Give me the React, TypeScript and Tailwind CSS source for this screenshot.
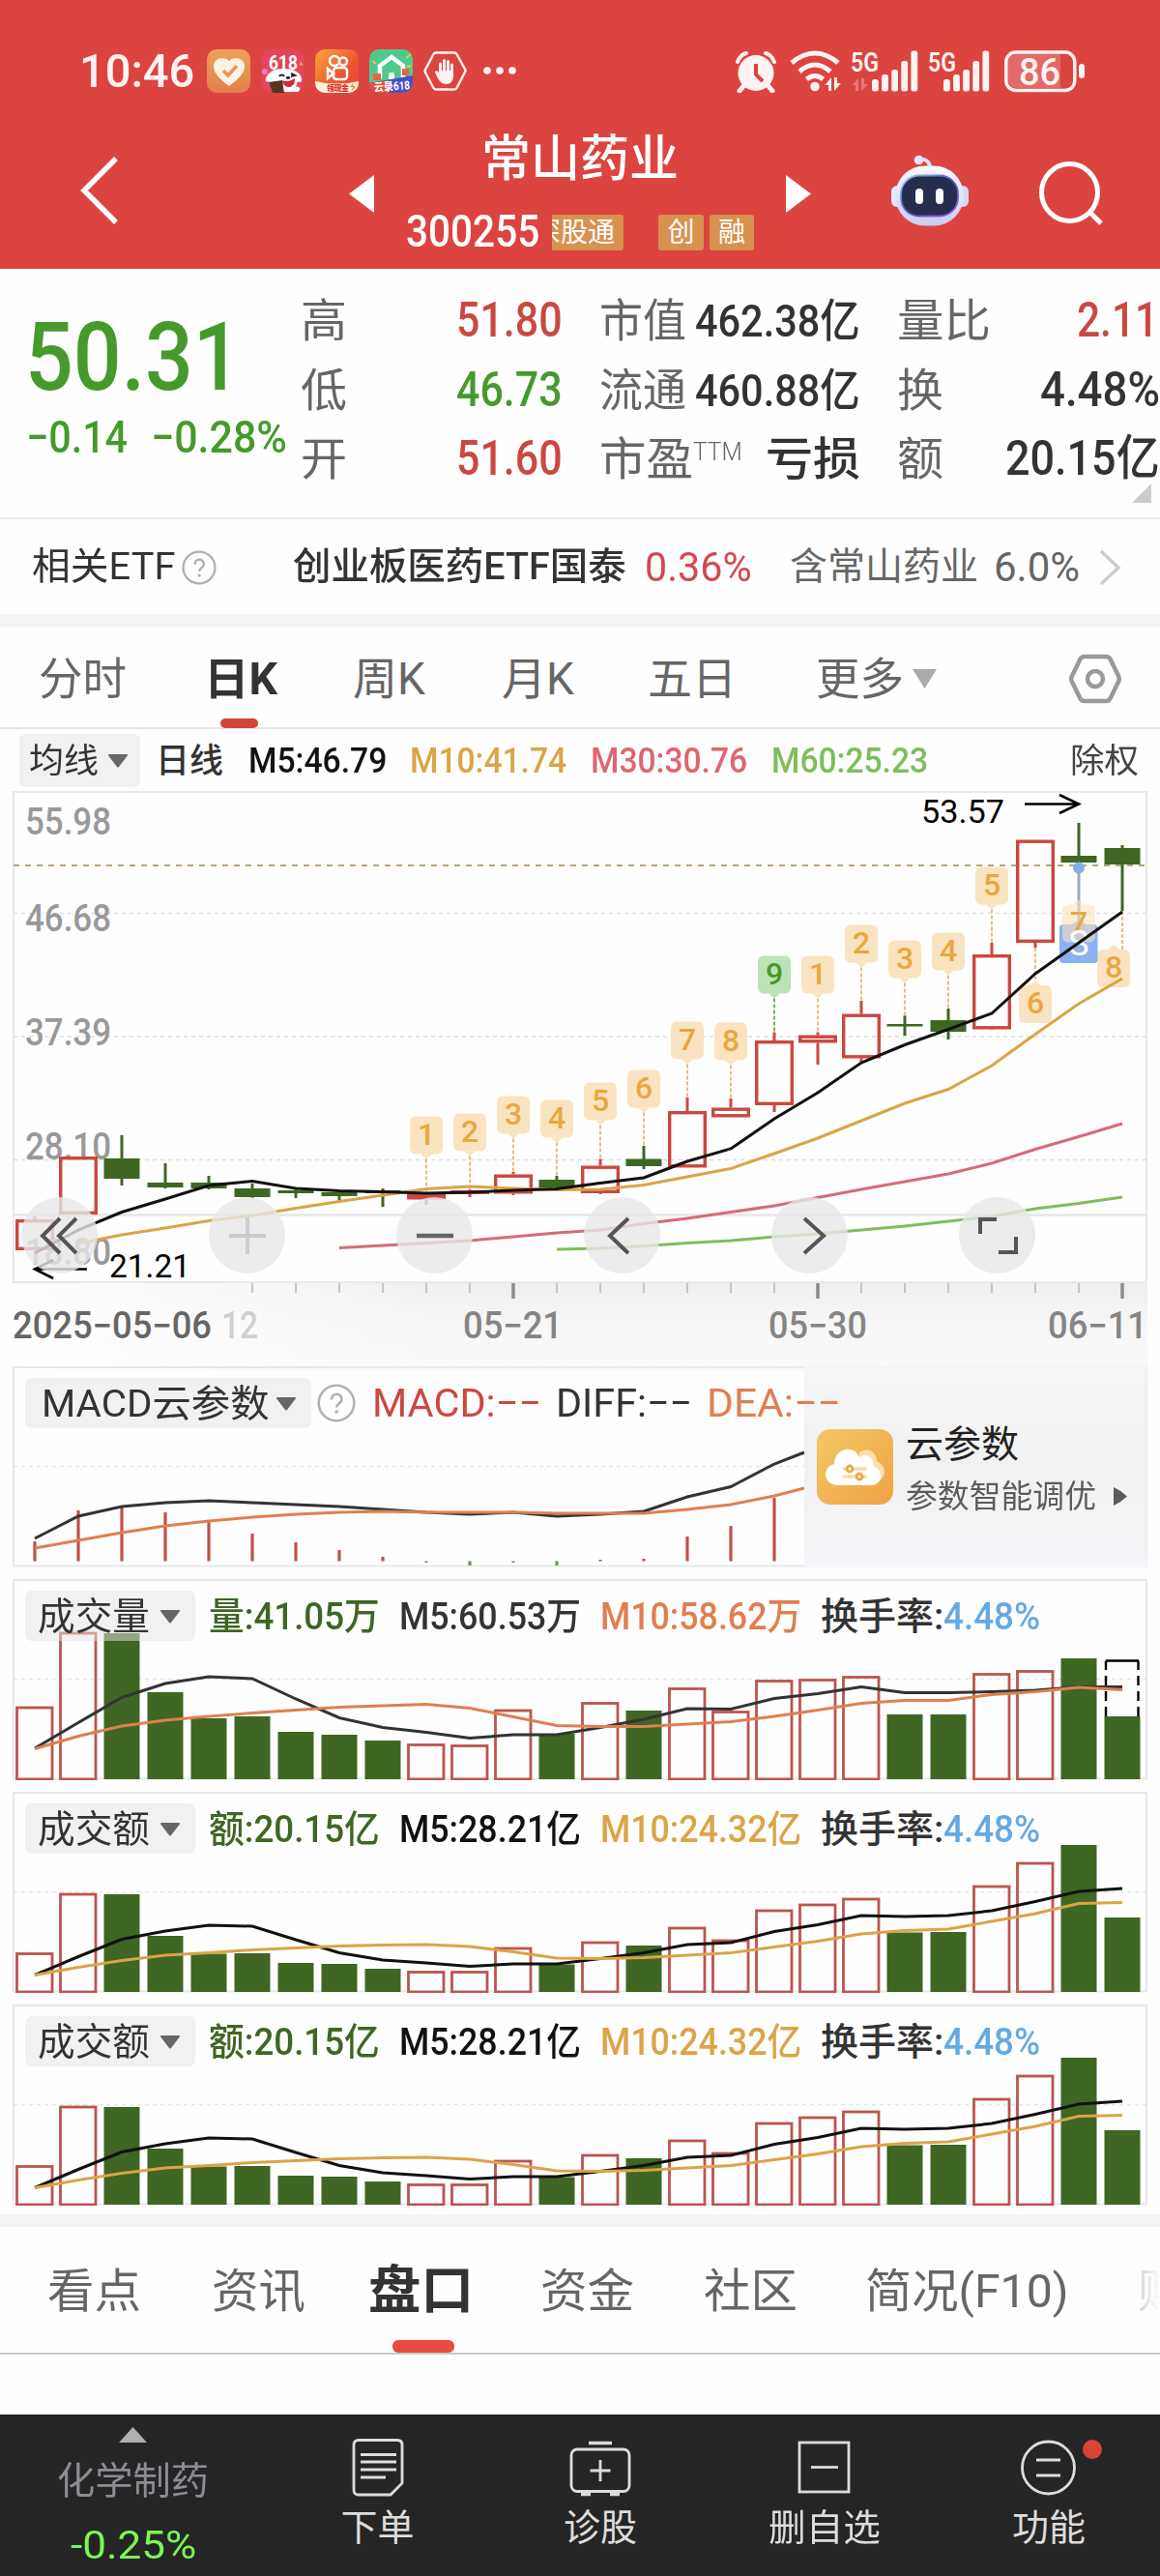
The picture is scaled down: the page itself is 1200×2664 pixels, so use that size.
import React, { useLayoutEffect, useRef, useState } from "react";

const RED = "#cb4840";
const DARK_GREEN = "#3f6623";
const GOLD = "#dba446";

/** Text squeezed or stretched horizontally to a fixed width. */
const Fit = ({
  w,
  className = "",
  children,
}: {
  w: number;
  className?: string;
  children: React.ReactNode;
}) => {
  const ref = useRef<HTMLSpanElement>(null);
  const [scale, setScale] = useState(1);

  useLayoutEffect(() => {
    if (ref.current) setScale(w / ref.current.offsetWidth);
  }, [w]);

  return (
    <span className={`block shrink-0 whitespace-nowrap ${className}`} style={{ width: w }}>
      <span ref={ref} className="inline-block origin-left" style={{ transform: `scaleX(${scale})` }}>
        {children}
      </span>
    </span>
  );
};

/** Chart text, placed on its baseline. */
const Label = ({
  x,
  y,
  w,
  size,
  fill,
  weight = 500,
  children,
}: {
  x: number;
  y: number;
  w: number;
  size: number;
  fill: string;
  weight?: number;
  children: string;
}) => (
  <text x={x} y={y} textLength={w} lengthAdjust="spacingAndGlyphs" fontSize={size} fill={fill} fontWeight={weight}>
    {children}
  </text>
);

/* ---------- header ---------- */

const AppIcons = () => (
  <div className="flex gap-[11px] ml-[13px]">
    <svg width="45" height="45" viewBox="0 0 45 45">
      <defs>
        <linearGradient id="heart" x1="0" y1="0" x2="0" y2="1">
          <stop offset="0" stopColor="#eea25c" />
          <stop offset="1" stopColor="#e27f4c" />
        </linearGradient>
      </defs>
      <rect width="45" height="45" rx="10" fill="url(#heart)" />
      <path d="M23 38C14 31 7 25 7 17.500c0-8 11-11.500 16-5 5-6.500 16-3 16 5C39 25 32 31 23 38Z" fill="#fdf3e2" />
      <path d="m17 22 5 5 9-10" fill="none" stroke="#e6955a" strokeWidth="3.500" />
    </svg>
    <svg width="45" height="45" viewBox="0 0 45 45">
      <rect width="45" height="45" rx="10" fill="#e2465a" />
      <circle cx="4" cy="23" r="3" fill="#f57ab4" />
      <path d="m41 12 2 4-3 1Z" fill="#f7c743" />
      <text x="8" y="21" fontSize="21" fontWeight="700" fill="#fff" textLength="30" lengthAdjust="spacingAndGlyphs">
        618
      </text>
      <path d="M5 30c2-6 8-10 18-10s17 3 19 10c1 4-2 5-4 3l-2 6c4-2 6 3 2 5H12L8 33c-2 1-4 0-3-3Z" fill="#fff" />
      <path d="M19 28c1-2 4-2 5 0M31 25l4 2-4 1" stroke="#222" strokeWidth="2" fill="none" />
      <ellipse cx="28" cy="29.500" rx="2.200" ry="1.400" fill="#222" />
      <path d="M21 32c5 2 10 1 14-2 1 9-9 14-14 2Z" fill="#d42a36" />
      <path d="m8 34 14-2 2 13H12Z" fill="#5c3520" />
    </svg>
    <svg width="45" height="45" viewBox="0 0 45 45">
      <defs>
        <linearGradient id="camera" x1="0" y1="0" x2="1" y2="1">
          <stop offset="0" stopColor="#f6a93c" />
          <stop offset=".6" stopColor="#ef5330" />
          <stop offset="1" stopColor="#f0413e" />
        </linearGradient>
        <clipPath id="rounded">
          <rect width="45" height="45" rx="10" />
        </clipPath>
      </defs>
      <g clipPath="url(#rounded)">
        <rect width="45" height="45" fill="url(#camera)" />
        <g fill="none" stroke="#fff" strokeWidth="2.500">
          <circle cx="20" cy="12" r="5" />
          <circle cx="29" cy="12.500" r="4" />
          <rect x="19" y="19" width="14" height="12" rx="3" />
          <path d="m19 25-6-5v10Z" />
        </g>
        <path d="M0 33q22 5 45 0v12H0Z" fill="#fdf0dc" />
        <text x="12" y="43" fontSize="8" fontWeight="900" fill="#e0332b" textLength="23">
          领现金
        </text>
        <path d="m40 34-4 5h3l-2 5 5-6h-3Z" fill="#f08a2c" />
      </g>
    </svg>
    <svg width="45" height="45" viewBox="0 0 45 45">
      <g clipPath="url(#rounded)">
        <rect width="45" height="45" fill="#4fc98d" />
        <path d="M11 30V17L23 8l12 9v13" fill="none" stroke="#fff" strokeWidth="4.500" />
        <path d="M20 31v-5c0-3 6-3 6 0v5Z" fill="#fff" />
        <path d="m38 9 5-4M3 12l4 3M39 18l4-1" stroke="#f0c34a" strokeWidth="2" />
        <rect x="4" y="25" width="8" height="7" fill="#e8643c" />
        <rect x="34" y="20" width="7" height="7" fill="#e8643c" />
        <path d="M0 35 45 27v18H0Z" fill="#4a4fc8" />
        <path d="M0 35 20 32v13H0Z" fill="#e2503a" />
        <text x="5" y="42.500" fontSize="12" fontWeight="700" fill="#fff" textLength="37" lengthAdjust="spacingAndGlyphs" transform="rotate(-4 22 38)">
          云录618
        </text>
      </g>
    </svg>
    <svg width="45" height="45" viewBox="0 0 45 45" fill="none" stroke="#fff3f2">
      <path d="M13 3.500h19a3 3 0 0 1 2.500 1.500l8.500 15.500a3 3 0 0 1 0 3L34.500 40a3 3 0 0 1-2.500 1.500H13a3 3 0 0 1-2.500-1.500L2 24a3 3 0 0 1 0-3L10.500 5A3 3 0 0 1 13 3.500Z" strokeWidth="2.500" />
      <path d="M17.500 24V15M21.500 22V11.500M25.500 22V12.500M29.500 24V16" strokeWidth="3" strokeLinecap="round" />
      <path d="M16 22h15v5c0 6-3 9-7 9-5 0-7-3-9-6l-3-6c0-2 2-2 3-1l2 3Z" fill="#fff3f2" stroke="none" />
    </svg>
    <svg width="45" height="45" viewBox="0 0 45 45" fill="#fff3f2">
      <circle cx="10" cy="22" r="3.800" />
      <circle cx="23" cy="22" r="3.800" />
      <circle cx="36" cy="22" r="3.800" />
    </svg>
  </div>
);

const Signal = ({ data, x }: { data?: boolean; x: number }) => (
  <svg
    className="overflow-visible"
    width={data ? 68 : 64}
    height="44"
    viewBox={data ? "0 0 68 44" : "0 0 64 44"}
    fill="#fff3f2"
  >
    <text x="-1" y="21.500" fontSize="28" fontWeight="600" textLength="29" lengthAdjust="spacingAndGlyphs">
      5G
    </text>
    {[30, 25, 20, 11, 0.5].map((top, i) => (
      <rect key={i} x={x + i * 10.1} y={top} width="6.800" height={42.5 - top} rx="2.500" />
    ))}
    {data && <path d="M7 29v13H4v-6H0.500ZM10 42V29h3v6h4Z" opacity=".3" />}
  </svg>
);

const StatusBar = () => (
  <div className="flex items-center h-[126px] pt-[21px] pl-[82px] pr-[77px] text-[#fff3f2]">
    <Fit w={119} className="text-[49px] font-medium leading-none">
      10:46
    </Fit>
    <AppIcons />
    <div className="flex items-center ml-auto">
      <svg width="42" height="44" viewBox="0 0 42 44" fill="#fff3f2">
        <ellipse cx="21" cy="23.500" rx="18.500" ry="18.500" />
        <path d="m9 36-5 6M33 36l5 6" stroke="#fff3f2" strokeWidth="5" strokeLinecap="round" />
        <path d="M2 12C4 7 7 4 11 3M40 12C38 7 35 4 31 3" fill="none" stroke="#fff3f2" strokeWidth="4" strokeLinecap="round" />
        <path d="M21 14v11l7 7" fill="none" stroke="#dc443f" strokeWidth="4" />
      </svg>
      <svg className="ml-[14px]" width="56" height="44" viewBox="0 0 56 44" fill="none" stroke="#fff3f2" strokeWidth="5">
        <path d="M2 13Q26-7 50 13M10 22Q26 8 42 22M17.500 30Q26 23 34.500 30" />
        <circle cx="26" cy="37.500" r="4.800" fill="#fff3f2" stroke="none" />
        <path d="M43 28v14h-3v-6H36.500ZM46 42V28h3v6H53Z" fill="#fff3f2" stroke="none" />
      </svg>
      <div className="flex ml-[8px] gap-[12px]">
        <Signal data x={21} />
        <Signal x={15} />
      </div>
      <svg className="ml-[14px]" width="84" height="44" viewBox="0 0 84 44" fill="#fff3f2">
        <path d="M12 4h46v35H12a8 8 0 0 1-8-8V12a8 8 0 0 1 8-8Z" opacity=".22" />
        <rect x="1.800" y="2" width="71" height="39.500" rx="10" fill="none" stroke="#fff3f2" strokeWidth="3.500" />
        <rect x="77" y="14" width="6" height="15" rx="3" />
        <text x="15" y="36" fontSize="39" fontWeight="500" textLength="43" lengthAdjust="spacingAndGlyphs">
          86
        </text>
      </svg>
    </div>
  </div>
);

const Robot = () => (
  <svg className="ml-[81px] mt-[33px]" width="84" height="77" viewBox="0 0 84 77">
    <defs>
      <linearGradient id="shell" x1="0" y1="0" x2="0" y2="1">
        <stop offset="0" stopColor="#fafaff" />
        <stop offset="1" stopColor="#c9cdf0" />
      </linearGradient>
      <linearGradient id="rim" x1="0" y1="0" x2="1" y2="1">
        <stop offset="0" stopColor="#8fd8e6" />
        <stop offset=".5" stopColor="#5b4fd0" />
        <stop offset="1" stopColor="#8a5be0" />
      </linearGradient>
    </defs>
    <path d="M30 6c8-1 12 2 12 9" fill="none" stroke="#dcdcf6" strokeWidth="4" />
    <circle cx="30.500" cy="6.500" r="4.800" fill="#e6e4f8" />
    <rect x="2" y="33" width="12" height="22" rx="6" fill="#e6e8fb" />
    <rect x="70" y="33" width="12" height="22" rx="6" fill="#d5d8f4" />
    <rect x="6" y="12.500" width="71" height="62" rx="31" fill="url(#shell)" />
    <rect x="12" y="22.500" width="59" height="42" rx="19" fill="#272d4f" stroke="url(#rim)" strokeWidth="1.800" />
    <rect x="27" y="36" width="8" height="16" rx="4" fill="#fff" />
    <rect x="48" y="36" width="8" height="16" rx="4" fill="#fff" />
  </svg>
);

const NavBar = () => (
  <div className="flex items-start h-[152px] text-white">
    <svg className="ml-[81px] mt-[33px]" width="44" height="76" viewBox="0 0 44 76">
      <path d="M39 5 6 38l33 33" fill="none" stroke="#fff" strokeWidth="5.500" />
    </svg>
    <svg className="ml-[236px] mt-[55px]" width="26" height="39">
      <path d="M26 0v39L0 19.500Z" fill="#fff" />
    </svg>
    <div className="w-[426px]">
      <p className="mt-[13px] text-center text-[51px] leading-[52px] h-[52px] font-medium">常山药业</p>
      <div className="flex items-start pl-[33px] mt-[31px] h-[37px]">
        <Fit w={138} className="-mt-[7px] text-[47px] font-medium leading-[48px]">
          300255
        </Fit>
        <div className="flex justify-end ml-[13px] w-[74px] h-[37px] pr-[9px] overflow-hidden rounded-r-[3px] bg-[#d89150] text-[28px] leading-[37px]">
          <span className="shrink-0">深股通</span>
        </div>
        <span className="ml-[36px] w-[47px] h-[37px] rounded-[3px] bg-[#d89150] text-center text-[28px] leading-[37px]">创</span>
        <span className="ml-[6px] w-[46px] h-[37px] rounded-[3px] bg-[#d89150] text-center text-[28px] leading-[37px]">融</span>
      </div>
    </div>
    <svg className="mt-[55px]" width="26" height="39">
      <path d="M0 0v39l26-19.500Z" fill="#fff" />
    </svg>
    <Robot />
    <svg className="ml-[70px] mt-[37px]" width="72" height="72" viewBox="0 0 72 72" fill="none" stroke="#fff" strokeWidth="5">
      <ellipse cx="32.500" cy="36" rx="29" ry="29.500" />
      <path d="m53 56 12 12" />
    </svg>
  </div>
);

/* ---------- quote ---------- */

const Quote = () => (
  <section className="relative flex h-[259px] border-b-2 border-[#ececec]">
    <div className="w-[311px] pt-[43px] pl-[26px] text-[#459a2b] font-medium">
      <Fit w={224} className="text-[99px] leading-[96px]">
        50.31
      </Fit>
      <div className="flex mt-[11px] pl-[1px] text-[46px] leading-[48px]">
        <Fit w={105}>−0.14</Fit>
        <Fit w={141} className="ml-[24px]">
          −0.28%
        </Fit>
      </div>
    </div>
    <div className="w-[271px] pt-[18px] text-[50px] leading-[71.500px] font-medium">
      <QuoteRow label="高" value="51.80" w={110} color="text-[#cb4840]" />
      <QuoteRow label="低" value="46.73" w={110} color="text-[#459a2b]" />
      <QuoteRow label="开" value="51.60" w={110} color="text-[#cb4840]" />
    </div>
    <div className="w-[270px] ml-[38px] pt-[18px] text-[47px] leading-[71.500px] font-medium text-[#333]">
      <QuoteRow label="市值" labelW={90} value="462.38亿" w={171} color="" />
      <QuoteRow label="流通" labelW={90} value="460.88亿" w={171} color="" />
      <div className="flex justify-between">
        <div className="flex">
          <Fit w={97} className="font-normal text-[#666]">
            市盈
          </Fit>
          <Fit w={51} className="-mt-[7px] text-[26px] font-light text-[#666]">
            TTM
          </Fit>
        </div>
        <Fit w={98}>亏损</Fit>
      </div>
    </div>
    <div className="w-[272px] ml-[38px] pt-[18px] text-[50px] leading-[71.500px] font-medium text-[#333]">
      <div className="pr-[2px]">
        <QuoteRow label="量比" labelW={97} value="2.11" w={84} color="text-[#cb4840]" />
      </div>
      <QuoteRow label="换" value="4.48%" w={124} color="" />
      <QuoteRow label="额" value="20.15亿" w={160} color="" />
    </div>
    <svg className="absolute right-[9px] bottom-[15px]" width="20" height="20">
      <path d="M20 0v20H0Z" fill="#ccc" />
    </svg>
  </section>
);

const QuoteRow = ({
  label,
  labelW = 48,
  value,
  w,
  color,
}: {
  label: string;
  labelW?: number;
  value: string;
  w: number;
  color: string;
}) => (
  <div className="flex justify-between">
    <Fit w={labelW} className="text-[47px] font-normal text-[#666]">
      {label}
    </Fit>
    <Fit w={w} className={color}>
      {value}
    </Fit>
  </div>
);

const Help = ({ className = "", size }: { className?: string; size: number }) => (
  <svg className={className} width={size} height={size} viewBox="0 0 40 40" fill="none" stroke="#b0b0b0">
    <circle cx="20" cy="20" r="18.300" strokeWidth="2.500" />
    <path d="M15 16.500c0-7.500 10.500-7.500 10.500-.5 0 4-5.300 4.500-5.300 8.500" strokeWidth="2.600" />
    <circle cx="20.200" cy="29" r="1.800" fill="#b0b0b0" stroke="none" />
  </svg>
);

const EtfRow = () => (
  <section className="flex items-center h-[98px] pl-[33px] pt-[1px] text-[39px] leading-none text-[#333]">
    <Fit w={148}>相关ETF</Fit>
    <Help size={36} className="ml-[7px]" />
    <Fit w={345} className="ml-[79px] font-medium">
      创业板医药ETF国泰
    </Fit>
    <Fit w={111} className="ml-[19px] text-[42px] text-[#d04a50]">
      0.36%
    </Fit>
    <Fit w={195} className="ml-[39px] text-[#666]">
      含常山药业
    </Fit>
    <Fit w={89} className="ml-[16px] text-[42px] text-[#666]">
      6.0%
    </Fit>
    <svg className="ml-[19px]" width="26" height="38" viewBox="0 0 26 38">
      <path d="m3 2 18 17L3 36" fill="none" stroke="#ccc" strokeWidth="3.500" />
    </svg>
  </section>
);

/* ---------- period tabs ---------- */

const Caret = ({ className = "", color = "#666" }: { className?: string; color?: string }) => (
  <svg className={className} width="20" height="14" viewBox="0 0 20 14">
    <path d="M1 0h18a1 1 0 0 1 .8 1.500L11 13a1.300 1.300 0 0 1-2 0L.2 1.500A1 1 0 0 1 1 0Z" fill={color} />
  </svg>
);

const PeriodTabs = () => (
  <nav className="flex items-center h-[106px] pt-[3px] pl-[40px] border-b-2 border-[#e6e6e6] text-[46px] leading-none text-[#666]">
    <Fit w={91}>分时</Fit>
    <div className="relative ml-[80px] text-[#333]">
      <Fit w={76} className="font-bold">
        日K
      </Fit>
      <i className="absolute left-[17px] top-[64px] w-[39px] h-[10px] rounded-[5px] bg-[#d0453a]" />
    </div>
    <Fit w={75} className="ml-[78px]">
      周K
    </Fit>
    <Fit w={75} className="ml-[79px]">
      月K
    </Fit>
    <Fit w={92} className="ml-[76px]">
      五日
    </Fit>
    <Fit w={91} className="ml-[82px]">
      更多
    </Fit>
    <svg className="ml-[9px]" width="25" height="20">
      <path d="M0 0h25L12.500 20Z" fill="#aaa" />
    </svg>
    <svg className="ml-[137px]" width="54" height="52" viewBox="0 0 54 52" fill="none" stroke="#999" strokeWidth="4.500">
      <path d="M16 3h22q3 0 4.500 2.500L51 23q1.500 3 0 6L42.500 46.500Q41 49 38 49H16q-3 0-4.500-2.500L3 29q-1.500-3 0-6L11.500 5.500Q13 3 16 3Z" />
      <circle cx="27" cy="26" r="8" />
    </svg>
  </nav>
);

const AverageRow = () => (
  <div className="flex items-center h-[64px] pl-[20px] text-[36.500px] leading-none font-medium">
    <button className="flex items-center w-[125px] h-[55px] pt-[2px] pl-[9px] rounded-[7px] bg-[#f1f1f1] text-[#333]">
      <Fit w={72} className="text-[35px] font-normal">
        均线
      </Fit>
      <Caret className="ml-[11px]" />
    </button>
    <div className="flex items-center pt-[2px]">
      <Fit w={70} className="ml-[16px] text-[35px] text-[#333]">
        日线
      </Fit>
      <Fit w={143} className="ml-[26px] text-[#111]">
        M5:46.79
      </Fit>
      <Fit w={162} className="ml-[24px] text-[#dba446]">
        M10:41.74
      </Fit>
      <Fit w={162} className="ml-[25px] text-[#dd6672]">
        M30:30.76
      </Fit>
      <Fit w={162} className="ml-[25px] text-[#80bd5c]">
        M60:25.23
      </Fit>
      <Fit w={71} className="ml-[147px] text-[35px] font-normal text-[#444]">
        除权
      </Fit>
    </div>
  </div>
);

/* ---------- charts ---------- */

// x of the i-th trading day
const cx = (i: number) => 36 + 45 * i;

const line = (ys: number[], from = 0) => ys.map((y, i) => `${cx(i + from)},${y}`).join(" ");

// [up, body top, body bottom, high, low]
const CANDLES: [boolean, number, number, number, number][] = [
  [true, 1261, 1293, 1258, 1293],
  [true, 1196, 1256, 1196, 1256],
  [false, 1198, 1219, 1174, 1226],
  [false, 1223, 1228, 1203, 1229],
  [false, 1223, 1229, 1216, 1230],
  [false, 1229, 1238, 1224, 1239],
  [false, 1231, 1234, 1229, 1239],
  [false, 1233, 1237, 1232, 1242],
  [false, 1231, 1234, 1229, 1248],
  [true, 1234, 1240.5, 1233, 1246],
  [true, 1231, 1235, 1230, 1238],
  [true, 1214.5, 1234.5, 1212, 1236],
  [false, 1220, 1228, 1216, 1230],
  [true, 1205.5, 1234, 1198.5, 1235],
  [false, 1198.5, 1206, 1185, 1209],
  [true, 1149, 1207.5, 1135, 1207],
  [true, 1145.5, 1155.5, 1136, 1155],
  [true, 1076, 1143, 1067.5, 1150],
  [true, 1070.5, 1078.5, 1067.5, 1101],
  [true, 1048.5, 1094.5, 1035, 1099],
  [false, 1059, 1061.5, 1050.5, 1071],
  [false, 1055, 1067, 1043, 1075],
  [true, 987, 1064.5, 975, 1065],
  [true, 868.5, 975, 869, 980],
  [false, 885, 892, 851, 896],
  [false, 877, 894, 874, 942],
];

const MA5 = [1296, 1272, 1253.5, 1240, 1226, 1221.5, 1229, 1231.5, 1232.5, 1234, 1233, 1231, 1229.5, 1223.5, 1218, 1201, 1188, 1157, 1130, 1099, 1080.5, 1064.5, 1048, 1007, 975, 943];
const MA10 = [1286, 1277, 1270, 1262.5, 1257, 1249.5, 1242.5, 1236, 1229.5, 1227, 1229, 1230.5, 1230, 1225.5, 1217, 1208.5, 1193, 1177, 1159, 1141, 1126.5, 1102, 1069.5, 1038, 1012];
const MA30 = [1290.5, 1288, 1285.5, 1283, 1279, 1275, 1272, 1265.5, 1260, 1253.5, 1247, 1238.5, 1230, 1222, 1214, 1203, 1188.5, 1175.5, 1162];
const MA60 = [1292, 1291, 1288.5, 1285.5, 1283, 1279, 1276, 1272, 1268, 1263, 1258, 1250, 1244.5, 1238];

// nine-turn markers above the candles: [day, digit, top]
const TURNS: [number, string, number][] = [
  [9, "1", 1154.5],
  [10, "2", 1151.5],
  [11, "3", 1133.5],
  [12, "4", 1137.5],
  [13, "5", 1119.5],
  [14, "6", 1106.5],
  [15, "7", 1056.5],
  [16, "8", 1057.5],
  [17, "9", 988.5],
  [18, "1", 988.5],
  [19, "2", 956.5],
  [20, "3", 972.5],
  [21, "4", 964.5],
  [22, "5", 896.5],
];

const Candle = ({ i }: { i: number }) => {
  const [up, top, bottom, high, low] = CANDLES[i];
  const x = cx(i);
  if (!up) {
    return (
      <g fill={DARK_GREEN}>
        <rect x={x - 18.5} y={top} width="37" height={bottom - top} />
        <rect x={x - 1.5} y={high} width="3" height={low - high} />
      </g>
    );
  }
  return (
    <g fill={RED}>
      <rect x={x - 1.5} y={high} width="3" height={top - high} />
      <rect x={x - 1.5} y={bottom} width="3" height={Math.max(low - bottom, 0)} />
      <rect x={x - 18.3} y={top + 1.7} width="36.600" height={Math.max(bottom - top - 3.4, 0.5)} fill="none" stroke={RED} strokeWidth="3.400" />
    </g>
  );
};

const Turn = ({ x, y, digit, down, see = 0.95 }: { x: number; y: number; digit: string; down?: boolean; see?: number }) => {
  const green = digit === "9";
  const fill = green ? "#b9e0b4" : "#fae2bd";
  return (
    <g>
      <g opacity={see}>
        <rect x={x - 17} y={y} width="34" height="39" rx="6" fill={fill} />
        <path d={down ? `M${x - 6} ${y}l6-5 6 5Z` : `M${x - 6} ${y + 39}l6 5 6-5Z`} fill={fill} />
      </g>
      <text x={x} y={y + 29} textAnchor="middle" fontSize="32" fontWeight="500" fill={green ? "#459a2b" : "#e9a740"}>
        {digit}
      </text>
    </g>
  );
};

const CTRL = "flex items-center justify-center w-[79px] h-[79px] rounded-full bg-[#e7e7e7]/80";

const PriceChart = () => (
  <section className="relative h-[595px]">
    <svg className="absolute inset-0" width="1200" height="603" viewBox="0 818 1200 603" fill="none">
      <defs>
        <linearGradient id="dateBg" x1="0" y1="0" x2="0" y2="1">
          <stop offset="0" stopColor="#eeeeee" />
          <stop offset=".5" stopColor="#f7f7f7" />
          <stop offset="1" stopColor="#fafafa" />
        </linearGradient>
        <linearGradient id="dateFade" x1="0" y1="0" x2="1" y2="0">
          <stop offset="0" stopColor="#fefefe" />
          <stop offset=".45" stopColor="#fefefe" stopOpacity=".7" />
          <stop offset="1" stopColor="#fefefe" stopOpacity="0" />
        </linearGradient>
      </defs>
      <rect x="14" y="1326" width="1173" height="92" fill="url(#dateBg)" />
      <rect x="0" y="1326" width="460" height="92" fill="url(#dateFade)" />

      <rect x="14" y="819" width="1172" height="507" stroke="#e9e9e9" strokeWidth="2" />
      <path d="M14 944.500h1172M14 1072h1172M14 1199.500h1172" stroke="#dedede" strokeWidth="1.300" strokeDasharray="4 4" />
      <path d="M14 1256.500h1172" stroke="#e6e6e6" strokeWidth="2.500" />

      <Label x={26} y={862.5} w={89} size={39} fill="#999">55.98</Label>
      <Label x={26} y={962.5} w={89} size={39} fill="#999">46.68</Label>
      <Label x={26} y={1081} w={89} size={39} fill="#999">37.39</Label>
      <Label x={26} y={1199} w={89} size={39} fill="#999">28.10</Label>
      <Label x={26} y={1307.5} w={89} size={39} fill="#999">18.80</Label>

      <path d="M14 895h1172" stroke="#b9a379" strokeWidth="2" strokeDasharray="6 6" />

      {TURNS.map(([i, , y]) => (
        <path key={i} d={`M${cx(i)} ${y + 44}V${CANDLES[i][3]}`} stroke={i === 17 ? "#459a2b" : "#d5ac62"} strokeWidth="1.500" strokeDasharray="4 2" />
      ))}
      <path d="M1071 980v33M1161 942v40" stroke="#d5ac62" strokeWidth="1.500" strokeDasharray="4 2" />

      {CANDLES.map((_, i) => (
        <Candle key={i} i={i} />
      ))}

      {TURNS.map(([i, digit, y]) => (
        <Turn key={i} x={cx(i)} y={y} digit={digit} />
      ))}
      <Turn x={1071} y={1019} digit="6" down />
      <Turn x={1152} y={982} digit="8" down />

      {/* sell marker */}
      <circle cx="1116" cy="897.500" r="6" fill="#86aee8" />
      <path d="M1116 900v52" stroke="#9aaac0" strokeWidth="3" />
      <rect x="1096" y="956" width="39.500" height="40" rx="4" fill="#8ab2f0" />
      <path d="m1109 956 7-5 7 5Z" fill="#8ab2f0" />
      <Turn x={1116} y={935.5} digit="7" down see={0.6} />
      <text x="1116" y="988" textAnchor="middle" fontSize="36" fill="#fff">S</text>

      <g strokeWidth="3">
        <polyline points={line(MA60, 12)} stroke="#80bd5c" />
        <polyline points={line(MA30, 7)} stroke="#d66b78" />
        <polyline points={line(MA10, 1)} stroke={GOLD} />
        <polyline points={line(MA5)} stroke="#111" />
      </g>

      <Label x={953} y={850.5} w={86} size={34} fill="#000" weight={400}>53.57</Label>
      <path d="M1060 831.500h56M1096 822l20 9.500-20 9.500" stroke="#000" strokeWidth="2.600" />
      <Label x={113} y={1320.5} w={84} size={34} fill="#000" weight={400}>21.21</Label>
      <path d="M90 1312.500H36M55 1303l-19 9.500 19 9.500" stroke="#000" strokeWidth="2.600" />

      {Array.from({ length: 21 }, (_, k) => k + 5).map((i) =>
        i === 11 || i === 18 || i === 25 ? (
          <path key={i} d={`M${cx(i)} 1327v16`} stroke="#8c8c8c" strokeWidth="3.500" />
        ) : (
          <path key={i} d={`M${cx(i)} 1327v10`} stroke="#c4c4c4" strokeWidth="2" />
        )
      )}
      <Label x={13} y={1384} w={206} size={38} fill="#666">2025−05−06</Label>
      <Label x={229} y={1384} w={38} size={38} fill="#cfcfcf">12</Label>
      <Label x={479} y={1384} w={103} size={38} fill="#858585">05−21</Label>
      <Label x={795} y={1384} w={102} size={38} fill="#858585">05−30</Label>
      <Label x={1084} y={1384} w={103} size={38} fill="#858585">06−11</Label>
    </svg>

    <div className="absolute left-[22px] top-[420px] flex gap-[115px]">
      <span className={CTRL}>
        <svg width="44" height="44" viewBox="0 0 44 44" fill="none" stroke="#555" strokeWidth="4">
          <path d="M22 4 4 22l18 18M39 4 21 22l18 18" />
        </svg>
      </span>
      <span className={CTRL}>
        <svg width="38" height="38" stroke="#cdcdcd" strokeWidth="4">
          <path d="M0 19h38M19 0v38" />
        </svg>
      </span>
      <span className={CTRL}>
        <svg width="38" height="38" stroke="#666" strokeWidth="4.500">
          <path d="M0 19h38" />
        </svg>
      </span>
      <span className={CTRL}>
        <svg width="44" height="44" viewBox="0 0 44 44" fill="none" stroke="#555" strokeWidth="4">
          <path d="M28 4 9 22l19 18" />
        </svg>
      </span>
      <span className={CTRL}>
        <svg width="44" height="44" viewBox="0 0 44 44" fill="none" stroke="#555" strokeWidth="4">
          <path d="m16 4 20 18-20 18" />
        </svg>
      </span>
      <span className={CTRL}>
        <svg width="44" height="44" viewBox="0 0 44 44" fill="none" stroke="#555" strokeWidth="4">
          <path d="M21 5H4v15M41 23v16H23" />
        </svg>
      </span>
    </div>
  </section>
);

/** Frame, dotted middle line and title row shared by the indicator panels. */
const Panel = ({ chart, children }: { chart: React.ReactNode; children: React.ReactNode }) => (
  <section className="relative h-[208px] mb-[12px]">
    <svg className="absolute inset-0" width="1200" height="208" viewBox="0 0 1200 208" fill="none">
      <rect x="14" y="1" width="1172" height="205.500" stroke="#e9e9e9" strokeWidth="2" />
      <path d="M14 103.500h1172" stroke="#e6e6e6" strokeWidth="1.500" strokeDasharray="4 4" />
      {chart}
    </svg>
    <div className="relative flex items-center h-[76px] pl-[26px] text-[39px] leading-none font-medium text-[#333]">
      {children}
    </div>
  </section>
);

const Selector = ({ w, children }: { w: number; children: string }) => (
  <button className="flex items-center h-[52px] pt-[2px] pl-[13px] pr-[16px] rounded-[7px] bg-[#e4e4e4]/50 font-normal">
    <Fit w={w}>{children}</Fit>
    <Caret className="ml-[11px]" />
  </button>
);

const DIFF = [178, 155, 145, 141, 139, 141, 143, 145, 148, 151, 153, 151, 155, 153, 150, 135, 124.5, 101];
const DEA = [188, 180, 172, 165, 160, 156, 153, 151, 150, 151, 151, 151, 152, 152, 152, 148, 143, 134];
const HIST = [181, 149, 146, 151, 160, 173, 182, 190, 197, 203, 206, 203, 206, 200, 199, 176, 165, 136];

const MacdPanel = () => (
  <Panel
    chart={
      <>
        {HIST.map((y, i) => (
          <path key={i} d={`M${cx(i)} 201.500V${y}`} stroke={y > 201.5 ? "#5c9c4d" : "#c0504a"} strokeWidth="3.200" />
        ))}
        <polyline points={`${line(DIFF)} 832,89`} stroke="#333" strokeWidth="3" />
        <polyline points={`${line(DEA)} 832,126`} stroke="#df7f50" strokeWidth="3" />
      </>
    }
  >
    <Selector w={236}>MACD云参数</Selector>
    <Help size={40} className="ml-[6px]" />
    <div className="relative z-10 flex gap-[15px] ml-[17px] pt-[1px] text-[41px] font-normal">
      <Fit w={175} className="text-[#cb4840]">
        MACD:−−
      </Fit>
      <Fit w={141}>DIFF:−−</Fit>
      <Fit w={139} className="text-[#df7f50]">
        DEA:−−
      </Fit>
    </div>
    <CloudPromo />
  </Panel>
);

const CloudPromo = () => (
  <div className="absolute left-[832px] top-0 flex w-[354px] h-[208px] pl-[13px] pt-[65px] bg-linear-to-b from-[#f6f6f7] via-[#f2f1f2] to-[#f5f4f8] font-normal">
    <svg width="79" height="78" viewBox="0 0 79 78">
      <defs>
        <linearGradient id="cloudBg" x1="0" y1="0" x2="1" y2="1">
          <stop offset="0" stopColor="#f3c864" />
          <stop offset="1" stopColor="#efa245" />
        </linearGradient>
      </defs>
      <rect width="79" height="78" rx="14" fill="url(#cloudBg)" />
      <path d="M44 24c9-6 18 0 18 9 11 5 10 18 0 22H44Z" fill="#fae0ae" />
      <path d="M22 58c-16 0-17-19-4-22 0-18 22-20 26-7 9-6 16 2 14 9 12 3 10 20-2 20Z" fill="#fff" />
      <path d="M28 41h22M28 49h22" stroke="#f8dcae" strokeWidth="3.500" strokeLinecap="round" />
      <g fill="#fff" stroke="#eda748" strokeWidth="2.800">
        <circle cx="34" cy="41" r="3" />
        <circle cx="44" cy="49" r="3" />
      </g>
    </svg>
    <div className="ml-[13px] -mt-[3px]">
      <Fit w={117} className="text-[39px] leading-none text-[#222]">
        云参数
      </Fit>
      <div className="flex items-center mt-[17px]">
        <Fit w={197} className="text-[33px] leading-none text-[#5c5c5c]">
          参数智能调优
        </Fit>
        <svg className="ml-[17px]" width="15" height="19">
          <path d="M1 0q7 3 14 9.500Q8 16 1 19Z" fill="#5a5a5a" />
        </svg>
      </div>
    </div>
  </div>
);

const UP_DAYS = [0, 1, 9, 10, 11, 13, 15, 16, 17, 18, 19, 22, 23];

const Bars = ({ tops, bottom }: { tops: number[]; bottom: number }) => (
  <>
    {tops.map((y, i) =>
      UP_DAYS.includes(i) ? (
        <rect key={i} x={cx(i) - 18.5} y={y + 1.5} width="36.500" height={bottom - y - 1.5} stroke="#bd544e" strokeWidth="2.800" />
      ) : (
        <rect key={i} x={cx(i) - 18.5} y={y} width="37" height={bottom - y} fill={DARK_GREEN} />
      )
    )}
  </>
);

const VOLUME = [131.5, 54.5, 56, 117, 144, 142, 158, 161, 167, 170, 171, 134.5, 160, 127, 136, 112, 136, 104, 103, 100, 140, 140, 97, 94, 82, 142];
const VOLUME5 = [175, 148.5, 122.5, 108, 101, 103, 124, 143.5, 153.5, 158.5, 164.5, 161, 161, 153.5, 145, 134, 134.5, 123.5, 118.5, 111.5, 117.5, 117.5, 116.5, 115, 111.5, 111.5];
const VOLUME10 = [175.5, 162.5, 152, 146, 142, 138.5, 135.5, 132.5, 131, 129.5, 133.5, 142.5, 151.5, 152.5, 152.5, 150, 147.5, 142, 135.5, 128.5, 125.5, 125.5, 119.5, 116.5, 112, 114.5];

const VolumePanel = () => (
  <Panel
    chart={
      <>
        <Bars tops={VOLUME} bottom={207} />
        {/* projected volume of the running session */}
        <path d="M1144 142V84.500M1177.500 142V84.500" stroke="#000" strokeWidth="2.400" strokeDasharray="10 6" />
        <path d="M1144 84.500h34" stroke="#000" strokeWidth="2.600" />
        <polyline points={line(VOLUME5)} stroke="#333" strokeWidth="3" />
        <polyline points={line(VOLUME10)} stroke="#df7f50" strokeWidth="3" />
      </>
    }
  >
    <Selector w={116}>成交量</Selector>
    <Readings>
      <Fit w={177} className="text-[#3f6623]">
        量:41.05万
      </Fit>
      <Fit w={188}>M5:60.53万</Fit>
      <Fit w={208} className="text-[#df7f50]">
        M10:58.62万
      </Fit>
    </Readings>
  </Panel>
);

const Readings = ({ children }: { children: React.ReactNode }) => (
  <div className="flex gap-[20px] ml-[14px] pt-[2px]">
    {children}
    <div className="flex">
      <Fit w={127}>换手率:</Fit>
      <Fit w={100} className="text-[#64a9e3]">
        4.48%
      </Fit>
    </div>
  </div>
);

const AMOUNT = [166, 104.5, 106, 149, 167.5, 167, 177, 178, 183, 185, 185, 160.5, 178.5, 154.5, 159, 139.5, 152.5, 121.5, 115.5, 109.5, 145.5, 145, 96.5, 72.5, 55, 130];
const AMOUNT5 = [189.5, 170.5, 152.5, 144, 138, 139, 153, 166.5, 174, 177, 180.5, 178, 178, 172.5, 166.5, 158, 156, 144.5, 137.5, 128, 129, 128, 123, 113.5, 103, 100];
const AMOUNT10 = [189.5, 181.5, 174.5, 169, 166.5, 163.5, 161.5, 159.5, 158.5, 158, 160, 165.5, 172, 172.5, 171.5, 169, 166.5, 160.5, 154.5, 147, 143.5, 142, 134, 126, 115.5, 114.5];

const AmountPanel = () => (
  <Panel
    chart={
      <>
        <Bars tops={AMOUNT} bottom={207} />
        <polyline points={line(AMOUNT5)} stroke="#111" strokeWidth="3" />
        <polyline points={line(AMOUNT10)} stroke={GOLD} strokeWidth="3" />
      </>
    }
  >
    <Selector w={116}>成交额</Selector>
    <Readings>
      <Fit w={177} className="text-[#3f6623]">
        额:20.15亿
      </Fit>
      <Fit w={188} className="text-[#111]">
        M5:28.21亿
      </Fit>
      <Fit w={208} className="text-[#dba446]">
        M10:24.32亿
      </Fit>
    </Readings>
  </Panel>
);

/* ---------- bottom ---------- */

const InfoTabs = () => (
  <nav className="flex items-center h-[132px] pt-[3px] pl-[49px] overflow-hidden border-b-2 border-[#cacaca] text-[48px] leading-none text-[#666]">
    <Fit w={97}>看点</Fit>
    <Fit w={97} className="ml-[73px]">
      资讯
    </Fit>
    <div className="relative ml-[65px] text-[#333]">
      <Fit w={109} className="text-[54px] font-bold">
        盘口
      </Fit>
      <i className="absolute left-[25px] top-[77px] w-[64px] h-[13px] rounded-[6px] bg-[#e54b3f]" />
    </div>
    <Fit w={97} className="ml-[69px]">
      资金
    </Fit>
    <Fit w={97} className="ml-[72px]">
      社区
    </Fit>
    <Fit w={211} className="ml-[70px]">
      简况(F10)
    </Fit>
    <span className="ml-[71px] shrink-0 bg-linear-to-r from-[#d4d4d4] from-0% to-white to-50% bg-clip-text text-transparent">财</span>
  </nav>
);

const BottomBar = () => (
  <footer className="flex h-[167px] bg-[#252525] text-[38px] leading-none text-[#dcdcdc]">
    <div className="flex flex-col items-center w-[275px] pt-[13px]">
      <svg width="29" height="16">
        <path d="M14.500 0 29 16H0Z" fill="#b0b0b0" />
      </svg>
      <Fit w={157} className="mt-[21px] text-[39px] text-[#8c8c96]">
        化学制药
      </Fit>
      <Fit w={130} className="mt-[27px] text-[40px] text-[#7cf553]">
        -0.25%
      </Fit>
    </div>
    <div className="flex flex-col items-center w-[231px] pt-[25px]">
      <svg width="54" height="60" viewBox="0 0 54 60" fill="none" stroke="#dcdcdc" strokeWidth="2.800">
        <path d="M7 1.500h40q5 0 5 5V46L40 58H7q-5 0-5-5V6.500q0-5 5-5Z" />
        <path d="M9 16.500h37M9 24h37M9 32h37M9 40h26" />
      </svg>
      <Fit w={76} className="mt-[13px]">
        下单
      </Fit>
    </div>
    <div className="flex flex-col items-center w-[230px] pt-[25px]">
      <svg width="64" height="60" viewBox="0 0 64 60" fill="none" stroke="#dcdcdc" strokeWidth="2.800">
        <rect x="2" y="11" width="60" height="43.500" rx="6" />
        <path d="M20 4.500h24M12 57.500h10M42 57.500h10" strokeWidth="3.500" />
        <path d="M32 22v22M21.500 33h21" />
      </svg>
      <Fit w={76} className="mt-[13px]">
        诊股
      </Fit>
    </div>
    <div className="flex flex-col items-center w-[234px] pt-[25px]">
      <svg width="56" height="60" viewBox="0 0 56 60" fill="none" stroke="#dcdcdc" strokeWidth="2.800">
        <rect x="2" y="4" width="51" height="51" />
        <path d="M14 29.500h28" />
      </svg>
      <Fit w={116} className="mt-[13px]">
        删自选
      </Fit>
    </div>
    <div className="relative flex flex-col items-center w-[230px] pt-[25px]">
      <svg width="58" height="60" viewBox="0 0 58 60" fill="none" stroke="#dcdcdc" strokeWidth="2.800">
        <circle cx="28.500" cy="30" r="27" />
        <path d="M16 22h25M16 38h25" />
      </svg>
      <Fit w={76} className="mt-[13px]">
        功能
      </Fit>
      <i className="absolute left-[150px] top-[26px] w-[20px] h-[20px] rounded-full bg-[#d8443a]" />
    </div>
  </footer>
);

export default function App() {
  return (
    <div className="w-[1200px] h-[2664px] overflow-hidden bg-[#fefefe] font-[Roboto,'Noto_Sans_CJK_SC',sans-serif]">
      <header className="bg-[#dc443f]">
        <StatusBar />
        <NavBar />
      </header>
      <Quote />
      <EtfRow />
      <div className="h-[13px] bg-[#f4f4f4]" />
      <PeriodTabs />
      <AverageRow />
      <PriceChart />
      <MacdPanel />
      <VolumePanel />
      <AmountPanel />
      <AmountPanel />
      <div className="h-[13px] -mt-[3px] bg-[#f4f4f4]" />
      <InfoTabs />
      <div className="h-[62px]" />
      <BottomBar />
    </div>
  );
}
